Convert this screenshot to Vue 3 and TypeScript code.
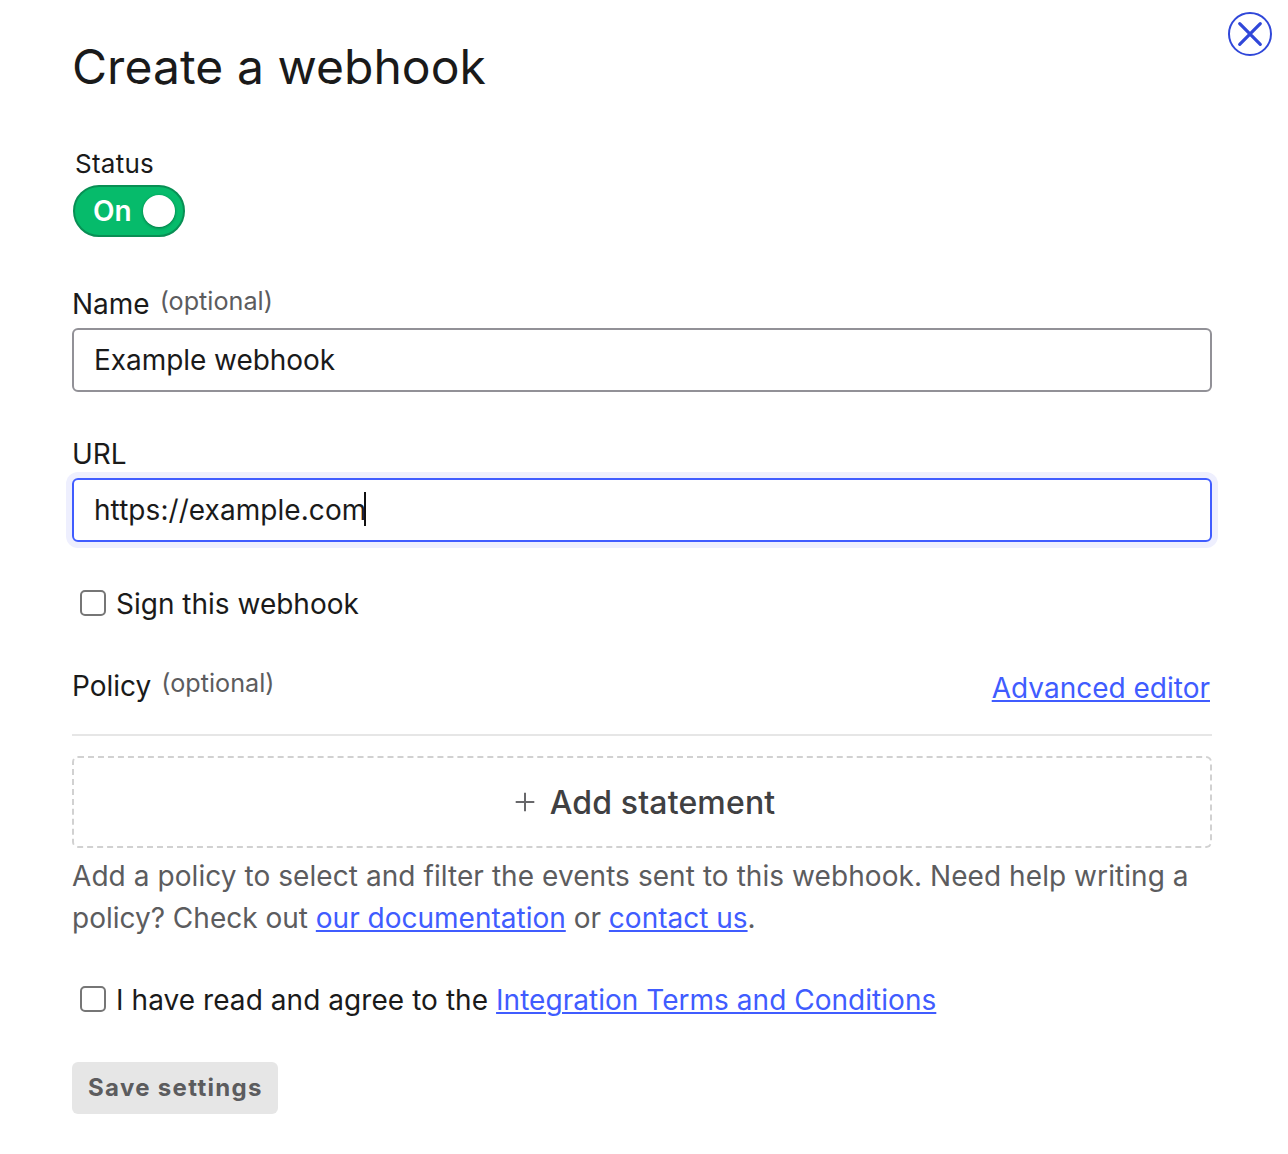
<script setup lang="ts">
import { ref } from 'vue'

const name = ref('Example webhook')
const url = ref('https://example.com')
const signed = ref(false)
const agreed = ref(false)
const enabled = ref(true)
</script>

<template>
  <main class="dialog">
    <button class="close" type="button" aria-label="Close">
      <svg width="44" height="44" viewBox="0 0 44 44" fill="none" stroke="#3047d9">
        <circle cx="22" cy="22" r="21" stroke-width="2" />
        <path d="M11.7 11.7 32.3 32.3M32.3 11.7 11.7 32.3" stroke-width="3.2" stroke-linecap="round" />
      </svg>
    </button>

    <h1 class="title">Create a webhook</h1>

    <div class="status-label">Status</div>
    <button class="toggle" type="button" role="switch" :aria-checked="enabled">
      <span class="toggle-text">{{ enabled ? 'On' : 'Off' }}</span>
      <span class="knob"></span>
    </button>

    <div class="field name-field">
      <div class="label">Name<span class="optional">(optional)</span></div>
      <div class="input"><span class="value">{{ name }}</span></div>
    </div>

    <div class="field url-field">
      <div class="label">URL</div>
      <div class="input focused"><span class="value url">{{ url }}</span><span class="caret"></span></div>
    </div>

    <label class="check sign">
      <input v-model="signed" type="checkbox" class="box" />
      <span>Sign this webhook</span>
    </label>

    <div class="policy-head">
      <div class="label">Policy<span class="optional">(optional)</span></div>
      <a class="link advanced">Advanced editor</a>
    </div>

    <button class="add" type="button">
      <svg width="20" height="20" viewBox="0 0 20 20" fill="none" stroke="#68686b" stroke-width="2">
        <path d="M10 .7v18.6M.7 10h18.6" />
      </svg>
      <span>Add statement</span>
    </button>

    <p class="help">
      <span class="help-lead">Add a policy to select and filter the events sent to this webhook. Need help writing a</span><br />policy? Check out <a class="link">our documentation</a> or <a class="link">contact us</a>.
    </p>

    <label class="check agree">
      <input v-model="agreed" type="checkbox" class="box" />
      <span><span class="agree-text">I have read and agree to the </span><a class="link terms">Integration Terms and Conditions</a></span>
    </label>

    <button class="save" type="button" disabled>Save settings</button>
  </main>
</template>

<style>
body {
  background: #fff;
}
</style>

<style scoped>
.dialog {
  position: relative;
  box-sizing: border-box;
  width: 1288px;
  height: 1154px;
  padding: 37px 76px 0 72px;
  font-family: Inter, sans-serif;
  font-size: 28px;
  line-height: 34px;
  color: #1a1a1a;
}
button {
  font-family: inherit;
  margin: 0;
  padding: 0;
  background: none;
  border: 0;
}
.close {
  position: absolute;
  top: 12px;
  right: 16px;
  width: 44px;
  height: 44px;
}
.close svg {
  display: block;
}
.title {
  margin: 0;
  font-size: 48px;
  line-height: 59px;
  font-weight: 400;
  letter-spacing: 0.06px;
}
.status-label {
  margin: 52px 0 0 3px;
  font-size: 26px;
  line-height: 31px;
  letter-spacing: 0.25px;
}
.toggle {
  display: flex;
  align-items: center;
  justify-content: space-between;
  box-sizing: border-box;
  width: 112px;
  height: 52px;
  margin: 6px 0 0 1px;
  padding: 0 8px 0 18px;
  border: 2px solid #088f54;
  border-radius: 26px;
  background: #06bb6b;
  color: #fff;
}
.toggle-text {
  font-size: 28px;
  line-height: 34px;
  font-weight: 600;
}
.knob {
  width: 32px;
  height: 32px;
  border-radius: 50%;
  background: #fff;
  box-shadow: 0 1px 3px rgba(0, 0, 0, 0.4);
}
.name-field {
  margin-top: 50px;
}
.url-field {
  margin-top: 45px;
}
.label {
  height: 34px;
  white-space: nowrap;
}
.optional {
  position: relative;
  top: -4px;
  margin-left: 10px;
  font-size: 25.2px;
  line-height: 1;
  color: #5c5c5e;
}
.input {
  display: flex;
  align-items: center;
  box-sizing: border-box;
  height: 64px;
  margin-top: 7px;
  padding: 0 20px;
  border: 2px solid #929197;
  border-radius: 6px;
}
.input.focused {
  border-color: #405cff;
  box-shadow: 0 0 0 6px #eeeffe;
}
.value {
  letter-spacing: -0.05px;
}
.value.url {
  letter-spacing: 0.06px;
}
.caret {
  width: 2px;
  height: 34px;
  margin: -2px 0 0 -2px;
  background: #111;
}
.check {
  display: flex;
  align-items: flex-start;
}
.box {
  appearance: none;
  box-sizing: border-box;
  flex: none;
  width: 26px;
  height: 26px;
  margin: 3px 10px 0 8px;
  border: 2px solid #767676;
  border-radius: 5px;
  background: #fff;
}
.sign {
  margin-top: 45px;
}
.policy-head {
  display: flex;
  justify-content: space-between;
  box-sizing: border-box;
  height: 67px;
  margin-top: 48px;
  border-bottom: 2px solid #e6e6e6;
}
.link {
  color: #405cff;
  text-decoration: underline;
  text-decoration-thickness: 2px;
  text-underline-offset: 2px;
}
.advanced {
  margin: 2px 2px 0 0;
}
.terms {
  letter-spacing: 0.03px;
}
.add {
  display: flex;
  align-items: center;
  justify-content: center;
  gap: 15px;
  box-sizing: border-box;
  width: 1140px;
  height: 92px;
  margin-top: 20px;
  padding-left: 6px;
  border: 2px dashed #d1d1d1;
  border-radius: 6px;
  font-size: 32px;
  line-height: 39px;
  font-weight: 500;
  letter-spacing: 0.15px;
  color: #404042;
}
.help {
  margin: 7px 0 0;
  line-height: 42px;
  color: #5c5c5e;
  white-space: nowrap;
}
.help-lead {
  letter-spacing: 0.065px;
}
.agree {
  margin-top: 44px;
}
.agree-text {
  letter-spacing: 0.06px;
}
.save {
  display: block;
  box-sizing: border-box;
  width: 206px;
  height: 52px;
  margin-top: 45px;
  padding: 0 0 2px 16px;
  border-radius: 6px;
  background: #e6e6e6;
  color: #5c5c5e;
  font-size: 24px;
  line-height: 29px;
  font-weight: 700;
  letter-spacing: 1.32px;
  text-align: left;
  white-space: nowrap;
}
</style>
